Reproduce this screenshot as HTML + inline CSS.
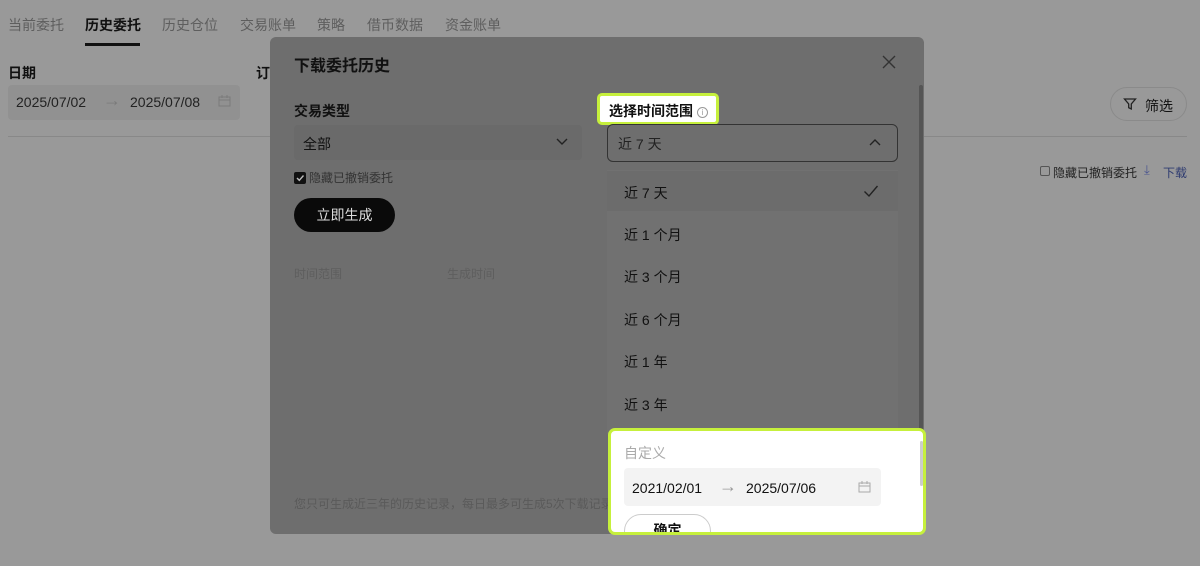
<!DOCTYPE html>
<html><head><meta charset="utf-8"><style>
*{margin:0;padding:0;box-sizing:border-box}
body{width:1200px;height:566px;overflow:hidden;background:#999;font-family:"Liberation Sans","Noto Sans CJK SC",sans-serif;color:#111;position:relative}
.a{position:absolute;white-space:nowrap}
.tab{top:15px;font-size:14px;color:#5e5e5e}
</style></head><body>
<div class="a tab" style="left:8px">当前委托</div>
<div class="a tab" style="left:85px;color:#111;font-weight:bold">历史委托</div>
<div class="a" style="left:85px;top:43px;width:55px;height:3px;background:#111"></div>
<div class="a tab" style="left:162px">历史仓位</div>
<div class="a tab" style="left:240px">交易账单</div>
<div class="a tab" style="left:317px">策略</div>
<div class="a tab" style="left:367px">借币数据</div>
<div class="a tab" style="left:445px">资金账单</div>
<div class="a" style="left:8px;top:63px;font-size:14px;font-weight:bold">日期</div>
<div class="a" style="left:256px;top:63px;font-size:14px;font-weight:bold">订</div>
<div class="a" style="left:8px;top:85px;width:232px;height:35px;background:#919191;border-radius:4px"></div>
<div class="a" style="left:16px;top:94px;font-size:14px;color:#222">2025/07/02</div>
<div class="a" style="left:103px;top:90px;font-size:18px;color:#7a7a7a">→</div>
<div class="a" style="left:130px;top:94px;font-size:14px;color:#222">2025/07/08</div>
<svg class="a" style="left:218px;top:95px" width="13" height="12"><rect x="1" y="2" width="11" height="9" fill="none" stroke="#7a7a7a"/><path d="M1 5h11M4 0v3M9 0v3" stroke="#7a7a7a"/></svg>
<div class="a" style="left:8px;top:136px;width:1179px;height:1px;background:#888"></div>
<div class="a" style="left:1110px;top:87px;width:77px;height:34px;border:1px solid #8a8a8a;border-radius:17px;font-size:14px;padding:8px 0 0 34px">筛选</div>
<svg class="a" style="left:1123px;top:97px" width="14" height="14"><path d="M1.5 2h11l-4.2 5v5l-2.6-1.3V7z" fill="none" stroke="#222" stroke-width="1.3"/></svg>
<div class="a" style="left:1040px;top:166px;width:10px;height:10px;border:1px solid #555;border-radius:2px"></div>
<div class="a" style="left:1053px;top:164px;font-size:12px;color:#222">隐藏已撤销委托</div>
<div class="a" style="left:1144px;top:162px;font-size:13px;color:#4a5590">⤓</div>
<div class="a" style="left:1163px;top:164px;font-size:12px;color:#2e3b70">下载</div>

<div class="a" style="left:270px;top:37px;width:654px;height:497px;background:#6e6e6e;border-radius:6px"></div>
<div class="a" style="left:294px;top:52px;font-size:16px;font-weight:bold">下载委托历史</div>
<svg class="a" style="left:882px;top:55px" width="14" height="14"><path d="M1 1l12 12M13 1L1 13" stroke="#333" stroke-width="1.4"/></svg>
<div class="a" style="left:294px;top:101px;font-size:14px;font-weight:bold">交易类型</div>
<div class="a" style="left:294px;top:125px;width:288px;height:35px;background:#6a6a6a;border-radius:4px"></div>
<div class="a" style="left:303px;top:134px;font-size:14px">全部</div>
<svg class="a" style="left:555px;top:137px" width="14" height="10"><path d="M2 2l5 5 5-5" fill="none" stroke="#222" stroke-width="1.4"/></svg>
<div class="a" style="left:294px;top:172px;width:12px;height:12px;background:#111;border-radius:2px"></div>
<svg class="a" style="left:295px;top:173px" width="10" height="10"><path d="M2 5l2.3 2.3L8.5 2.5" fill="none" stroke="#bbb" stroke-width="1.4"/></svg>
<div class="a" style="left:309px;top:169px;font-size:12px;color:#333">隐藏已撤销委托</div>
<div class="a" style="left:294px;top:198px;width:101px;height:34px;background:#0a0a0a;border-radius:17px;color:#ddd;font-size:14px;text-align:center;line-height:34px">立即生成</div>
<div class="a" style="left:294px;top:265px;font-size:12px;color:#5e5e5e">时间范围</div>
<div class="a" style="left:447px;top:265px;font-size:12px;color:#5e5e5e">生成时间</div>
<div class="a" style="left:294px;top:495px;font-size:12px;color:#5a5a5a">您只可生成近三年的历史记录，每日最多可生成5次下载记录</div>
<div class="a" style="left:919px;top:85px;width:4px;height:345px;background:#555;border-radius:2px"></div>

<div class="a" style="left:597px;top:93px;width:122px;height:32px;background:#fff;border:3px solid #c6f03c;border-radius:5px;font-size:14px;font-weight:bold;padding:5px 0 0 9px">选择时间范围 <span style="display:inline-block;width:11px;height:11px;border:1px solid #999;border-radius:50%;font-size:8px;color:#999;text-align:center;line-height:10px;vertical-align:1px;font-weight:normal">i</span></div>
<div class="a" style="left:607px;top:124px;width:291px;height:38px;border:1px solid #333;border-radius:6px;font-size:14px;color:#222;padding:9px 0 0 10px">近 7 天</div>
<svg class="a" style="left:868px;top:138px" width="14" height="10"><path d="M2 7l5-5 5 5" fill="none" stroke="#222" stroke-width="1.4"/></svg>
<div class="a" style="left:607px;top:170px;width:291px;height:264px;background:#717171"></div>
<div class="a" style="left:607px;top:171px;width:291px;height:40px;background:#6c6c6c"></div>
<div class="a" style="left:624px;top:183px;font-size:14px">近 7 天</div>
<svg class="a" style="left:863px;top:184px" width="16" height="14"><path d="M1.5 7.5l4.5 4.5L14.5 2" fill="none" stroke="#222" stroke-width="1.4"/></svg>
<div class="a" style="left:624px;top:225px;font-size:14px">近 1 个月</div>
<div class="a" style="left:624px;top:267px;font-size:14px">近 3 个月</div>
<div class="a" style="left:624px;top:310px;font-size:14px">近 6 个月</div>
<div class="a" style="left:624px;top:352px;font-size:14px">近 1 年</div>
<div class="a" style="left:624px;top:395px;font-size:14px">近 3 年</div>

<div class="a" style="left:608px;top:428px;width:318px;height:107px;background:#fff;border:3px solid #c6f03c;border-radius:7px;overflow:hidden">
<div class="a" style="left:13px;top:12px;font-size:14px;color:#aaa">自定义</div>
<div class="a" style="left:13px;top:37px;width:257px;height:38px;background:#f3f3f3;border-radius:4px"></div>
<div class="a" style="left:21px;top:49px;font-size:14px;color:#111">2021/02/01</div>
<div class="a" style="left:108px;top:45px;font-size:18px;color:#999">→</div>
<div class="a" style="left:135px;top:49px;font-size:14px;color:#111">2025/07/06</div>
<svg class="a" style="left:247px;top:50px" width="13" height="12"><rect x="1" y="2" width="11" height="9" fill="none" stroke="#aaa"/><path d="M1 5h11M4 0v3M9 0v3" stroke="#aaa"/></svg>
<div class="a" style="left:13px;top:83px;width:87px;height:34px;border:1px solid #ccc;border-radius:17px;font-size:14px;font-weight:bold;text-align:center;line-height:30px">确定</div>
<div class="a" style="left:309px;top:10px;width:3px;height:45px;background:#ccc;border-radius:2px"></div>
</div>
</body></html>
